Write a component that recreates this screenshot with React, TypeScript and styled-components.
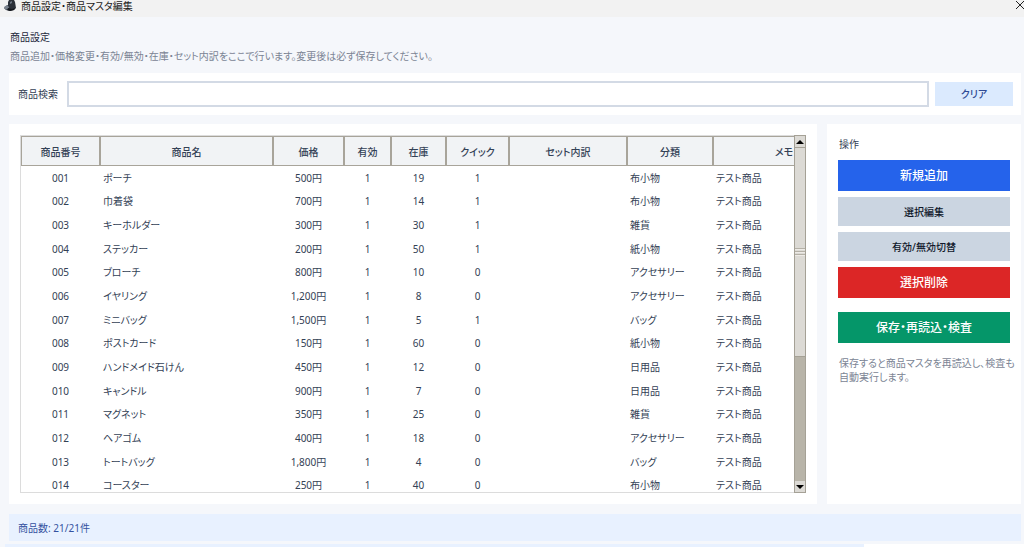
import React, { useState } from "react";
import { createGlobalStyle, styled } from "styled-components";

const GlobalStyle = createGlobalStyle`
  * {
    box-sizing: border-box;
  }
  body {
    margin: 0;
    background: #f5f7fb;
    color: #334155;
    font: 10px/14px "Noto Sans", "Noto Sans CJK JP", sans-serif;
    font-feature-settings: "palt" 1;
  }
  button,
  input {
    font: inherit;
    font-feature-settings: inherit;
  }
`;

const Window = styled.div`
  display: flex;
  flex-direction: column;
  height: 100vh;
  overflow: hidden;
`;

const TitleBar = styled.header`
  display: flex;
  align-items: flex-start;
  gap: 4px;
  height: 17px;
  padding-left: 4px;
  background: #f2f2f2;
  color: #1b1b1b;
  flex-shrink: 0;
`;

const TitleText = styled.span`
  flex: 1;
  line-height: 12px;
`;

const CloseButton = styled.button`
  display: flex;
  padding: 0;
  border: 0;
  background: none;
  color: #222222;
`;

const Content = styled.main`
  display: flex;
  flex-direction: column;
  flex: 1;
  min-height: 0;
  padding: 13px 3px 3px 9px;
`;

const Heading = styled.h1`
  margin: 0 0 5px 1px;
  font-size: 10px;
  line-height: 14px;
  font-weight: 400;
  color: #1e293b;
`;

const Description = styled.p`
  margin: 0 0 10px 1px;
  color: #7b8494;
`;

const SearchPanel = styled.div`
  display: flex;
  align-items: center;
  gap: 6px;
  height: 42px;
  padding: 0 8px 0 9px;
  background: #ffffff;
  flex-shrink: 0;
`;

const SearchLabel = styled.label`
  margin-right: 3px;
`;

const SearchInput = styled.input`
  flex: 1;
  height: 26px;
  padding: 0 4px;
  border: 2px solid #d3dae5;
  outline: none;
  background: #ffffff;
`;

const ClearButton = styled.button`
  width: 78px;
  height: 24px;
  padding: 0;
  border: 0;
  background: #dbeafe;
  color: #2f4a94;
  font-weight: 500;
`;

const Body = styled.div`
  display: flex;
  gap: 10px;
  flex: 1;
  min-height: 0;
  margin: 9px 0 10px;
`;

const TablePanel = styled.section`
  display: flex;
  flex: 1;
  min-width: 0;
  padding: 11px;
  background: #ffffff;
`;

const TableView = styled.div`
  flex: 1;
  min-width: 0;
  overflow: hidden;
  border: 1px solid #dcdcdc;
  border-right: 0;
`;

const Table = styled.table`
  width: 834px;
  height: 361px;
  table-layout: fixed;
  border-collapse: separate;
  border-spacing: 0;
`;

const HeadCell = styled.th<{ $width: number }>`
  width: ${(p) => p.$width}px;
  height: 30px;
  padding: 1px 0 0;
  border: 1px solid #a8a49a;
  background: #f1f3f5;
  color: #334155;
  font-weight: 500;
`;

const Cell = styled.td<{ $left?: boolean }>`
  padding: 0 3px;
  text-align: ${(p) => (p.$left ? "left" : "center")};
  white-space: nowrap;
`;

const ScrollBar = styled.div`
  display: flex;
  flex-direction: column;
  width: 12px;
  border: 1px solid #a5a196;
  background: #b8b4a9;
`;

const ScrollArrow = styled.button`
  display: flex;
  align-items: center;
  justify-content: center;
  height: 11px;
  padding: 0;
  border: 0;
  background: #dcdad5;
`;

const Thumb = styled.div`
  display: flex;
  flex-direction: column;
  justify-content: center;
  gap: 1px;
  border: solid #a5a196;
  border-width: 1px 0;
  background: #dcdad5;
`;

const Grip = styled.span`
  height: 2px;
  border-top: 1px solid #b5b1a7;
  background: #eeebe7;
`;

const Trough = styled.div`
  flex: 1;
  min-height: 0;
`;

const SidePanel = styled.aside`
  display: flex;
  flex-direction: column;
  gap: 6px;
  width: 194px;
  padding: 13px 11px 0;
  background: #ffffff;
`;

const SideTitle = styled.h2`
  margin: 0 0 3px 1px;
  font-size: 10px;
  line-height: 14px;
  font-weight: 400;
`;

const ActionButton = styled.button<{ $bg: string; $large?: boolean }>`
  height: ${(p) => (p.$large ? 31 : 29)}px;
  padding: 0;
  border: 0;
  background: ${(p) => p.$bg};
  color: ${(p) => (p.$large ? "#ffffff" : "#0f172a")};
  font-size: ${(p) => (p.$large ? 12 : 10)}px;
  font-weight: 500;
`;

const SaveGroup = styled.div`
  display: flex;
  flex-direction: column;
  gap: 13px;
  margin-top: 8px;
`;

const Note = styled.p`
  margin: 0 0 0 1px;
  color: #7b8494;
  white-space: nowrap;
`;

const StatusBar = styled.footer`
  height: 27px;
  padding: 0 9px;
  background: #e8f1ff;
  color: #3451a0;
  line-height: 28px;
  flex-shrink: 0;
`;

const BottomEdge = styled.div`
  display: flex;
  height: 3px;
  padding-left: 5px;
  flex-shrink: 0;
`;

const EdgePart = styled.div<{ $grow: number; $bg: string }>`
  flex: ${(p) => p.$grow};
  background: ${(p) => p.$bg};
`;

const columns = [
  { label: "商品番号", width: 79 },
  { label: "商品名", width: 173, left: true },
  { label: "価格", width: 71 },
  { label: "有効", width: 47 },
  { label: "在庫", width: 55 },
  { label: "クイック", width: 63 },
  { label: "セット内訳", width: 118 },
  { label: "分類", width: 86, left: true },
  { label: "メモ", width: 142, left: true },
];

const products = [
  ["001", "ポーチ", "500円", "1", "19", "1", "", "布小物", "テスト商品"],
  ["002", "巾着袋", "700円", "1", "14", "1", "", "布小物", "テスト商品"],
  ["003", "キーホルダー", "300円", "1", "30", "1", "", "雑貨", "テスト商品"],
  ["004", "ステッカー", "200円", "1", "50", "1", "", "紙小物", "テスト商品"],
  ["005", "ブローチ", "800円", "1", "10", "0", "", "アクセサリー", "テスト商品"],
  ["006", "イヤリング", "1,200円", "1", "8", "0", "", "アクセサリー", "テスト商品"],
  ["007", "ミニバッグ", "1,500円", "1", "5", "1", "", "バッグ", "テスト商品"],
  ["008", "ポストカード", "150円", "1", "60", "0", "", "紙小物", "テスト商品"],
  ["009", "ハンドメイド石けん", "450円", "1", "12", "0", "", "日用品", "テスト商品"],
  ["010", "キャンドル", "900円", "1", "7", "0", "", "日用品", "テスト商品"],
  ["011", "マグネット", "350円", "1", "25", "0", "", "雑貨", "テスト商品"],
  ["012", "ヘアゴム", "400円", "1", "18", "0", "", "アクセサリー", "テスト商品"],
  ["013", "トートバッグ", "1,800円", "1", "4", "0", "", "バッグ", "テスト商品"],
  ["014", "コースター", "250円", "1", "40", "0", "", "布小物", "テスト商品"],
];

const total = 21;
const visibleShare = 59;

const AppIcon = () => (
  <svg width="13" height="12" viewBox="0 0 13 12">
    <path d="M5 0h5l1 2 1 6-2 2-4 1-4-1-2-2 2-2 2-1V2z" fill="#2b3038" />
    <path d="M0 7l3-2 2 2-1 3-3-1z" fill="#7c848f" />
    <path d="M6 2l2-1v2L6 4z" fill="#6d7682" />
    <path d="M4 8l4 1 3-1-1 2-4 1-3-1z" fill="#14171c" />
  </svg>
);

const App = () => {
  const [query, setQuery] = useState("");
  const rows = products.filter((row) => row.join(" ").includes(query));
  const count = query ? rows.length : total;

  return (
    <>
      <GlobalStyle />
      <Window>
        <TitleBar>
          <AppIcon />
          <TitleText>商品設定・商品マスタ編集</TitleText>
          <CloseButton aria-label="閉じる">
            <svg width="9" height="10" viewBox="0 0 9 10">
              <path d="M1 1l8 8M9 1L1 9" stroke="currentColor" fill="none" />
            </svg>
          </CloseButton>
        </TitleBar>
        <Content>
          <Heading>商品設定</Heading>
          <Description>
            商品追加・価格変更・有効/無効・在庫・セット内訳をここで行います。変更後は必ず保存してください。
          </Description>
          <SearchPanel>
            <SearchLabel htmlFor="search">商品検索</SearchLabel>
            <SearchInput
              id="search"
              type="text"
              value={query}
              onChange={(event) => setQuery(event.target.value)}
            />
            <ClearButton onClick={() => setQuery("")}>クリア</ClearButton>
          </SearchPanel>
          <Body>
            <TablePanel>
              <TableView>
                <Table>
                  <thead>
                    <tr>
                      {columns.map((col) => (
                        <HeadCell key={col.label} $width={col.width}>
                          {col.label}
                        </HeadCell>
                      ))}
                    </tr>
                  </thead>
                  <tbody>
                    {rows.map((row) => (
                      <tr key={row[0]}>
                        {row.map((value, i) => (
                          <Cell key={columns[i].label} $left={columns[i].left}>
                            {value}
                          </Cell>
                        ))}
                      </tr>
                    ))}
                  </tbody>
                </Table>
              </TableView>
              <ScrollBar>
                <ScrollArrow aria-label="上へ">
                  <svg width="8" height="4" viewBox="0 0 8 4">
                    <path d="M0 4L4 0l4 4z" />
                  </svg>
                </ScrollArrow>
                <Thumb style={{ height: `${visibleShare}%` }}>
                  <Grip />
                  <Grip />
                  <Grip />
                </Thumb>
                <Trough />
                <ScrollArrow aria-label="下へ">
                  <svg width="8" height="4" viewBox="0 0 8 4">
                    <path d="M0 0l4 4 4-4z" />
                  </svg>
                </ScrollArrow>
              </ScrollBar>
            </TablePanel>
            <SidePanel>
              <SideTitle>操作</SideTitle>
              <ActionButton $bg="#2563eb" $large>
                新規追加
              </ActionButton>
              <ActionButton $bg="#cbd5e1">選択編集</ActionButton>
              <ActionButton $bg="#cbd5e1">有効/無効切替</ActionButton>
              <ActionButton $bg="#dc2626" $large>
                選択削除
              </ActionButton>
              <SaveGroup>
                <ActionButton $bg="#059669" $large>
                  保存・再読込・検査
                </ActionButton>
                <Note>
                  保存すると商品マスタを再読込し、検査も
                  <br />
                  自動実行します。
                </Note>
              </SaveGroup>
            </SidePanel>
          </Body>
          <StatusBar>
            商品数: {count}/{total}件
          </StatusBar>
        </Content>
        <BottomEdge>
          <EdgePart $grow={859} $bg="#e8f1ff" />
          <EdgePart $grow={160} $bg="#ffffff" />
        </BottomEdge>
      </Window>
    </>
  );
};

export default App;
